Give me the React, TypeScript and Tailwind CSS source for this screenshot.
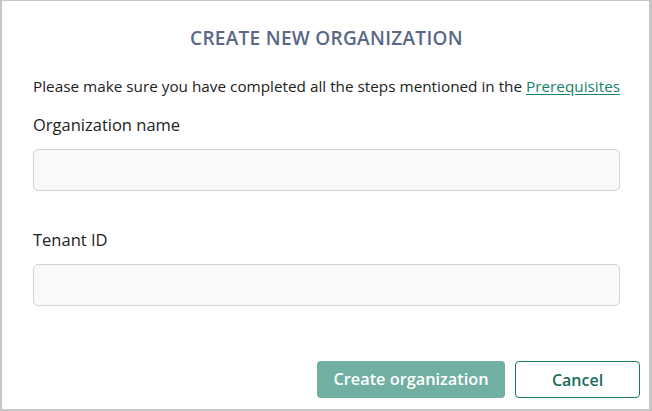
export default function App() {
  return (
    <div className="w-[652px] h-[411px] bg-white border-t border-l-2 border-r-[3px] border-b-2 border-[#c6c6c6] font-['Open_Sans',sans-serif] text-[#222]">
      <div className="flex flex-col pl-[31px] pr-[29px]">
        {/* Title */}
        <h2 className="mt-[23px] text-center text-[19px] leading-[28px] font-semibold text-[#5a6886] tracking-[0.3px]">
          CREATE NEW ORGANIZATION
        </h2>

        {/* Description */}
        <p className="mt-[24px] text-[15.3px] leading-[20px] whitespace-nowrap">
          Please make sure you have completed all the steps mentioned in the{" "}
          <a href="#" className="text-[#15826a] underline underline-offset-2">
            Prerequisites
          </a>
        </p>

        <label className="mt-[18px] text-[16.5px] leading-[22px]">Organization name</label>
        <input className="mt-[13px] h-[42px] w-full rounded-[5px] border border-[#d2d2d2] bg-[#f9f9f9]" />

        <label className="mt-[38px] text-[16.5px] leading-[22px]">Tenant ID</label>
        <input className="mt-[13px] h-[42px] w-full rounded-[5px] border border-[#d2d2d2] bg-[#f9f9f9]" />

        {/* Actions */}
        <div className="mt-[55px] flex justify-end gap-[10px] -mr-[20px]">
          <button className="h-[37px] w-[188px] rounded-[4px] bg-[#70afa1] text-[16.3px] font-semibold text-white">
            Create organization
          </button>
          <button className="h-[37px] w-[125px] rounded-[4px] border border-[#1b7a66] bg-white text-[16px] font-semibold text-[#1d6b5b]">
            Cancel
          </button>
        </div>
      </div>
    </div>
  );
}
